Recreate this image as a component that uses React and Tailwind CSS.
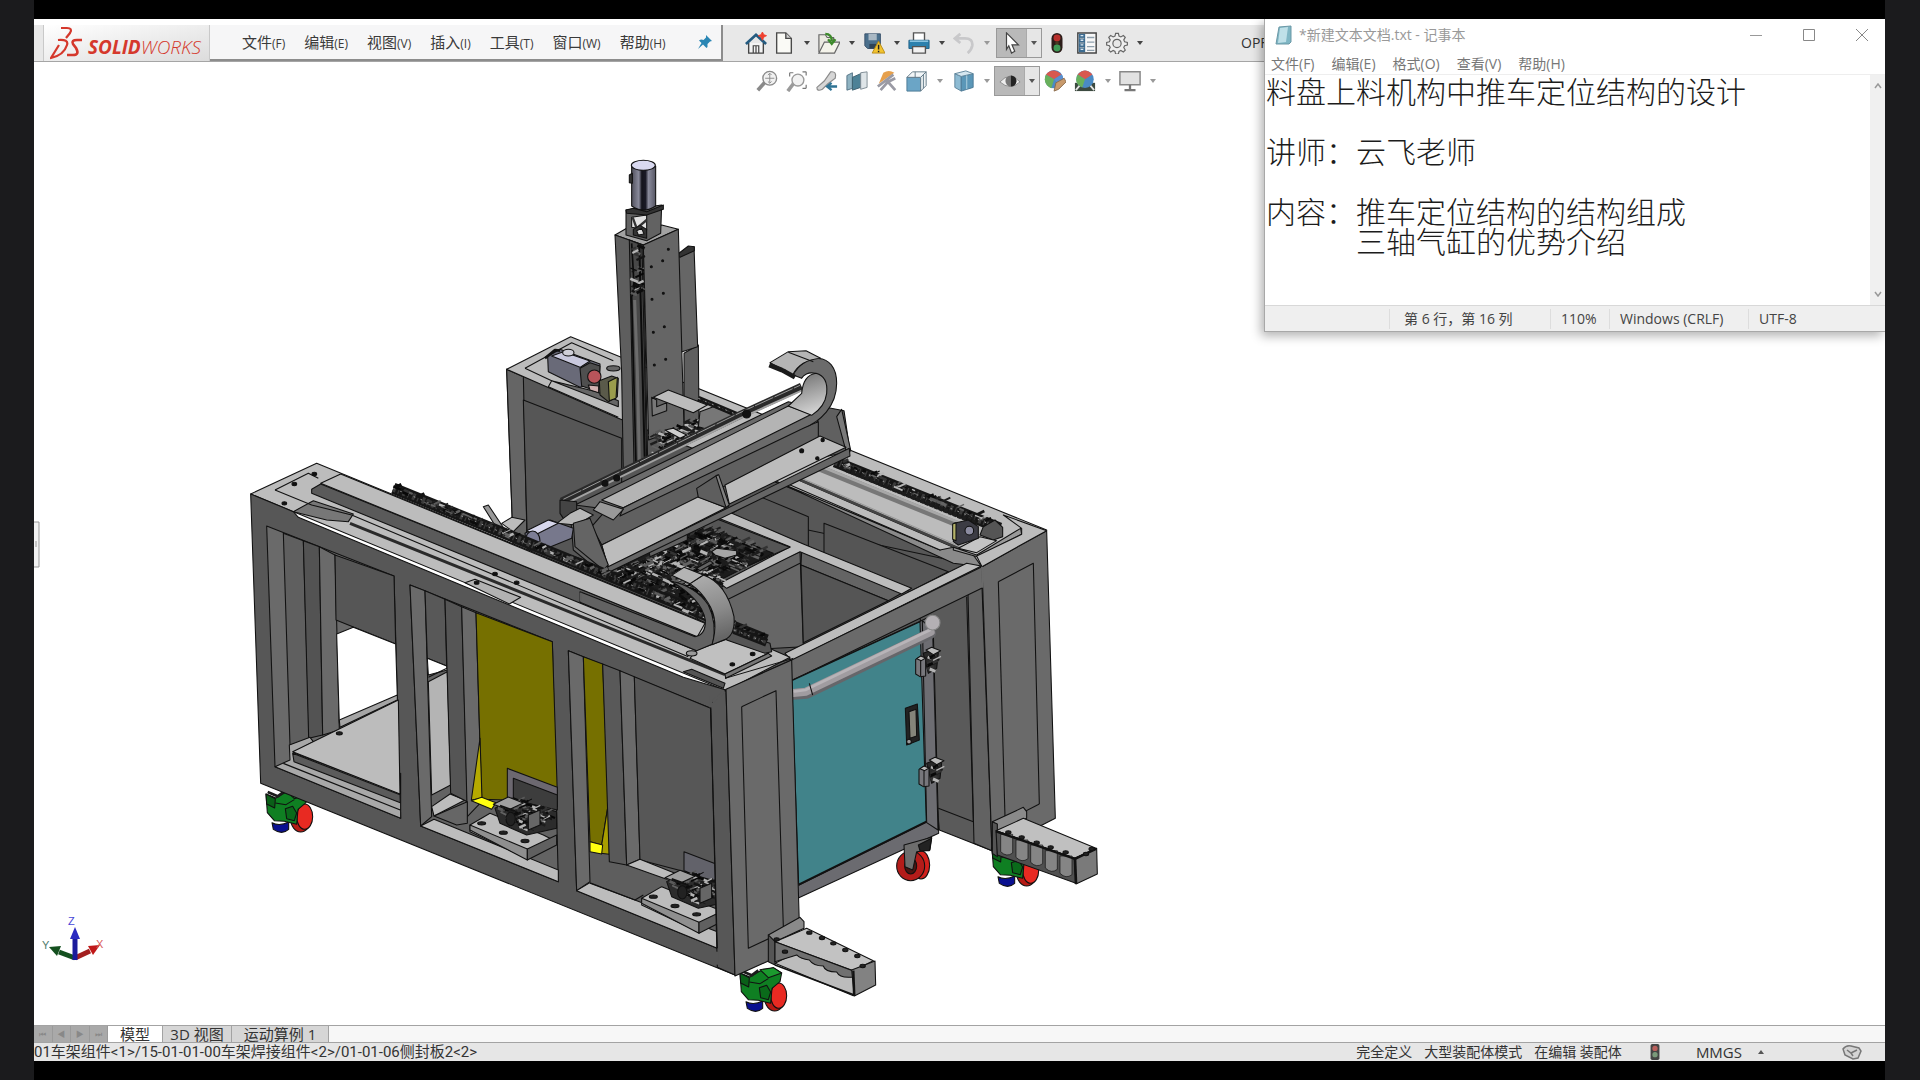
import { useState } from "react";

const DARK = "#575757";
const MID = "#6a6a6a";
const LIGHT = "#bcbcbc";

const MENUS = [
  ["文件", "(F)"],
  ["编辑", "(E)"],
  ["视图", "(V)"],
  ["插入", "(I)"],
  ["工具", "(T)"],
  ["窗口", "(W)"],
  ["帮助", "(H)"],
];

const NOTEPAD_MENUS = ["文件(F)", "编辑(E)", "格式(O)", "查看(V)", "帮助(H)"];

const NOTE_TEXT = `料盘上料机构中推车定位结构的设计

讲师：云飞老师

内容：推车定位结构的结构组成
　　　三轴气缸的优势介绍`;

/* ---------- small building blocks ---------- */

function Icon({ children }) {
  return (
    <svg viewBox="0 0 24 24" className="h-[22px] w-[22px] shrink-0" fill="none">
      {children}
    </svg>
  );
}

function Caret({ color = "#555" }) {
  return (
    <svg viewBox="0 0 6 4" className="h-1 w-1.5" fill={color}>
      <path d="M0 0h6L3 4z" />
    </svg>
  );
}

function Tool({ label, children }) {
  return (
    <button type="button" aria-label={label} className="flex shrink-0 items-center">
      <Icon>{children}</Icon>
    </button>
  );
}

function SplitTool({ label, children, muted }) {
  return (
    <div className="flex w-[45px] shrink-0 items-center">
      <Tool label={label}>{children}</Tool>
      <button
        type="button"
        aria-label={`${label} 选项`}
        className="flex flex-1 items-center justify-center"
      >
        <Caret color={muted ? "#999" : "#444"} />
      </button>
    </div>
  );
}

function ActiveTool({ label, children }) {
  return (
    <div className="flex h-[30px] w-[46px] shrink-0 border border-[#999]">
      <button
        type="button"
        aria-label={label}
        className="flex w-[29px] items-center justify-center bg-[#b9b9b9]"
      >
        <Icon>{children}</Icon>
      </button>
      <button
        type="button"
        aria-label={`${label} 选项`}
        className="flex flex-1 items-center justify-center border-l border-[#aaa] bg-[#e6e6e6]"
      >
        <Caret />
      </button>
    </div>
  );
}

function TrafficLight() {
  return (
    <>
      <rect x="6" y="1" width="12" height="22" rx="6" fill="#2c1d1a" />
      <circle cx="12" cy="6.5" r="3.8" fill="#b9302c" />
      <circle cx="12" cy="12" r="2" fill="#4a3a20" />
      <circle cx="12" cy="17.5" r="3.8" fill="#3f9a55" />
    </>
  );
}

/* ---------- top bar ---------- */

function Logo() {
  return (
    <div className="flex w-[167px] shrink-0 items-center border-x border-[#c9c9c9] bg-linear-to-br from-white to-[#dcdcdc] pl-1.5">
      <svg viewBox="0 0 34 34" className="h-[34px] w-[34px] shrink-0" fill="none" stroke="#d5382c">
        <path d="M11 2h6q6 0 3 5l-4 5" strokeWidth="2.2" />
        <path d="M8 14q11-1 9 5-3 10-16 13l8-13" strokeWidth="2.2" />
        <path d="M32 14h-5q-6 0-4 4l3 4q4 7-3 7h-6" strokeWidth="2.6" />
      </svg>
      <span className="pl-1 pt-2 font-['Open_Sans',sans-serif] text-[19px] leading-none italic text-[#d5382c]">
        <b>SOLID</b>
        <span className="font-light">WORKS</span>
      </span>
    </div>
  );
}

function TopBar() {
  return (
    <header className="flex h-[37px] shrink-0 overflow-hidden border-b border-[#a5a5a5] bg-[#e8e8e8] pl-[9px]">
      <Logo />
      <nav className="flex w-[513px] shrink-0 items-center gap-[19px] border-r-2 border-b-2 border-[#8c8c8c] bg-[#f6f6f7] pl-8 text-[15px] text-[#3a3a3a]">
        {MENUS.map(([name, key]) => (
          <button key={name} type="button" className="flex shrink-0 items-baseline whitespace-nowrap">
            {name}
            <span className="text-[12px]">{key}</span>
          </button>
        ))}
        <button type="button" aria-label="固定菜单" className="ml-3 shrink-0">
          <svg viewBox="0 0 16 16" className="h-4 w-4">
            <path d="M9 1l6 6-2 .5-2.500 2.500q.5 3-1 4L6 10.500 1 15l3.500-6L2 6.500q2-1.500 4.500-.5L9 3.500z" fill="#2a86b4" />
          </svg>
        </button>
      </nav>
      <div className="flex shrink-0 items-center pl-[22px]">
        <div className="mr-1.5 flex">
          <Tool label="主页">
            <path d="M4 12v11h16V12" fill="#f4f4f4" stroke="#444" strokeWidth="1.500" />
            <path d="M1 13L12 3l11 10" stroke="#245b80" strokeWidth="3" />
            <path d="M9 23v-8h6v8M12 15v8" stroke="#444" strokeWidth="1.300" />
            <path d="M19 0l1.500 3 3 1-3 1.500L19 9l-1.500-3.500-3-1.500 3-1z" fill="#f0402e" stroke="#f0402e" />
          </Tool>
        </div>
        <SplitTool label="新建">
          <path d="M4 1h10l6 6v16H4z" fill="#fafaf6" stroke="#4a4a4a" strokeWidth="1.500" />
          <path d="M14 1v6h6" fill="#d0d0d0" stroke="#4a4a4a" strokeWidth="1.500" />
        </SplitTool>
        <SplitTool label="打开">
          <path d="M1 22V3h7l2 3h7v6" fill="#ecebe2" stroke="#666" strokeWidth="1.300" />
          <path d="M1 23L7 11h17l-6 12z" fill="#f4f3ea" stroke="#666" strokeWidth="1.300" />
          <path d="M8 2q7 0 7 8M11 8l4 5 4-5" stroke="#3d8a2a" strokeWidth="2.600" />
        </SplitTool>
        <SplitTool label="保存">
          <path d="M2 2h17v16H5l-3-3z" fill="#4a6f8c" stroke="#39516a" />
          <path d="M6 2h9v7H6z" fill="#a9b8c4" />
          <path d="M7 13h8v5H7z" fill="#2e4356" />
          <path d="M17 10l7 13H10z" fill="#f2c32e" stroke="#b98b15" />
          <path d="M17 14v5M17 20.500v1.500" stroke="#222" strokeWidth="1.600" />
        </SplitTool>
        <SplitTool label="打印">
          <path d="M6 10V1h12v9" fill="#fff" stroke="#555" strokeWidth="1.500" />
          <path d="M1 9h22v9H1z" fill="#2c81ae" stroke="#1f5f86" />
          <path d="M2 10h20" stroke="#9ad0ea" strokeWidth="1.500" />
          <path d="M5 16h14v7H5z" fill="#f2f2f2" stroke="#555" strokeWidth="1.500" />
        </SplitTool>
        <SplitTool label="撤消" muted>
          <path d="M8 2L2 7l6 5M3 7h10q9 0 8 8-1 5-5 8" stroke="#c8c8ca" strokeWidth="3" />
        </SplitTool>
        <div className="-ml-0.5 mr-1 flex">
          <ActiveTool label="选择">
            <path d="M6 1l13 13h-7l3 7-3.500 2-3-8L6 19z" fill="#fff" stroke="#444" strokeWidth="1.300" />
          </ActiveTool>
        </div>
        <div className="flex items-center gap-2">
          <Tool label="重建模型">
            <TrafficLight />
          </Tool>
          <Tool label="文件属性">
            <path d="M2 1h20v22H2z" fill="#f8f8f8" stroke="#454545" strokeWidth="1.600" />
            <path d="M3 2h7v20H3z" fill="#3d6c91" />
            <path d="M4 7h5M4 12h5M4 17h5M12 6h8M12 11h8M12 16h8M12 20h8" stroke="#8fa0ad" strokeWidth="1.500" />
            <path d="M5 4h3M5 9h3M5 14h3M5 19h3" stroke="#dbe8f2" strokeWidth="1.500" />
          </Tool>
          <SplitTool label="选项">
            <path
              d="M10.500 1.500h3l.7 3 2 .9 2.700-1.600 2.100 2.100-1.600 2.700.9 2 3 .7v3l-3 .7-.9 2 1.600 2.700-2.100 2.100-2.700-1.600-2 .9-.7 3h-3l-.7-3-2-.9-2.700 1.600L3 19.700 4.600 17l-.9-2-3-.7v-3l3-.7.9-2L3 5.900l2.100-2.100 2.700 1.600 2-.9z"
              fill="#efefef"
              stroke="#666"
              strokeWidth="1.300"
            />
            <circle cx="12" cy="12.500" r="4.500" fill="#e8e8e8" stroke="#666" strokeWidth="1.300" />
          </SplitTool>
        </div>
      </div>
      <span className="ml-[90px] self-center font-['Open_Sans',sans-serif] text-sm text-[#333]">OPF</span>
    </header>
  );
}

function ViewBar() {
  return (
    <div className="flex h-[35px] shrink-0 items-center gap-2 overflow-hidden bg-white pt-0.5 pl-[722px]">
      <Tool label="整屏显示全图">
        <path d="M2 22l8-9" stroke="#8a8a8a" strokeWidth="4" />
        <circle cx="15" cy="9" r="7.500" fill="#f2f2f2" stroke="#8a8a8a" strokeWidth="1.500" />
        <path d="M15 4v10M10 9h10M13 5.500l2-2 2 2M13 12.500l2 2 2-2" stroke="#8a8a8a" />
      </Tool>
      <Tool label="局部放大">
        <path d="M2 23l6-8" stroke="#9a9a9a" strokeWidth="4" />
        <circle cx="13" cy="11" r="6.500" fill="#f2f2f2" stroke="#9a9a9a" strokeWidth="1.500" />
        <path d="M4 3h4M4 3v4M22 2h-4M22 2v4M22 20h-4M22 20v-4" stroke="#777" strokeWidth="1.300" />
      </Tool>
      <Tool label="上一视图">
        <path d="M16 2q7-1 5 7l-8 6-6 6q-6 3-6-2l8-7z" fill="#d6d6d6" stroke="#8b8b8b" strokeWidth="1.300" />
        <path d="M23 18h-9M17 14l-5 4 5 4" stroke="#2f7394" strokeWidth="2.500" />
      </Tool>
      <Tool label="剖面视图">
        <path d="M1 6l6-3v17l-6 2z" fill="#8fb3c2" stroke="#517082" />
        <path d="M7 8l9-4v15l-9 3z" fill="#4d8297" stroke="#3d5f6f" />
        <path d="M16 3l7-1v17l-7 2z" fill="#dfe5e8" stroke="#7b8890" />
      </Tool>
      <Tool label="动态注解视图">
        <path d="M8 3q6-4 12 0L3 15z" fill="#e6a04c" />
        <path d="M2 18L19 5M5 22l8-9 8 9M13 13l8-4" stroke="#9a9aa4" strokeWidth="3" />
      </Tool>
      <div className="flex items-center">
        <SplitTool label="视图定向" muted>
          <path d="M1 8h15v15H1z" fill="#6ba5c6" stroke="#4b7894" />
          <path d="M1 8l6-6h15l-6 6z" fill="#f2f6f8" stroke="#5f7785" />
          <path d="M16 8l6-6v15l-6 6z" fill="#eef2f4" stroke="#5f7785" />
          <path d="M10 2v6M19 5v15" stroke="#5f7785" />
        </SplitTool>
        <span className="w-0.5" />
        <SplitTool label="显示样式" muted>
          <path d="M2 4l7 3v16l-7-4z" fill="#8dbbd3" stroke="#5b8299" />
          <path d="M9 7l13-3v15L9 23z" fill="#5b97b8" stroke="#4b7894" />
          <path d="M2 4l12-3 8 3-13 3z" fill="#d5e6ef" stroke="#5b8299" />
          <path d="M15 6v15" stroke="#b7d5e4" />
        </SplitTool>
        <div className="-ml-1 mr-1 flex">
          <ActiveTool label="隐藏/显示项目">
            <path d="M1 13Q12 1 23 13 12 23 1 13z" fill="#eee" stroke="#888" />
            <circle cx="13" cy="12" r="6" fill="#777" />
            <path d="M13 6a6 6 0 010 12z" fill="#222" />
          </ActiveTool>
        </div>
        <div className="flex items-center gap-2">
          <Tool label="编辑外观">
            <circle cx="11" cy="10" r="10" fill="#4a8ac4" />
            <path d="M11 10L2 5q8-9 17 0z" fill="#d8584f" />
            <path d="M11 10L19 5q5 7-2 12z" fill="#5b8fd0" />
            <path d="M11 10L2 5q-4 10 6 15z" fill="#69b05c" />
            <path d="M11 23l2-9 9-5 2 4-8 8z" fill="#c89a6c" stroke="#8a6a4a" />
          </Tool>
          <SplitTool label="应用布景" muted>
            <path d="M1 14h22v9H1z" fill="#3c4a40" />
            <path d="M2 22l5-6M17 16l5 6" stroke="#e4e4e4" strokeWidth="2" />
            <circle cx="12" cy="10" r="9.500" fill="#4a8ac4" />
            <path d="M12 10L4 5q8-9 16 0z" fill="#d8584f" />
            <path d="M12 10L4 5q-5 10 5 14z" fill="#69b05c" />
          </SplitTool>
        </div>
        <SplitTool label="视图设定" muted>
          <path d="M1 2h22v14H1z" fill="#e2e2e2" stroke="#888" strokeWidth="1.600" />
          <path d="M12 16v5M6 22h12" stroke="#777" strokeWidth="2.500" />
        </SplitTool>
      </div>
    </div>
  );
}

/* ---------- model drawing ---------- */

function P({ p, f = "none" }) {
  return <polygon points={p} fill={f} />;
}

function L({ p, w, c, d }) {
  return <polyline points={p} fill="none" stroke={c} strokeWidth={w} strokeDasharray={d} />;
}

// Every part group is drafted at three times the sheet scale.
function Part({ x, y, children }) {
  return (
    <g
      transform={`translate(${x} ${y}) scale(0.33333)`}
      stroke="#111"
      strokeWidth="3.2"
      strokeLinejoin="round"
    >
      {children}
    </g>
  );
}

// Fills the quad a-b-c-d with small machine parts.
function Clutter({ a, b, c, d, n, seed = 7 }) {
  const shades = ["#080808", "#0c0c0c", "#141414", "#1d1d1d", "#333", "#5a5a5a", "#636363", "#b4b4b4"];
  let s = seed;
  const rnd = () => {
    s = (s * 16807) % 2147483647;
    return s / 2147483647;
  };
  const items = [];
  for (let i = 0; i < n; i++) {
    const u = rnd();
    const v = rnd();
    const x = (1 - v) * ((1 - u) * a[0] + u * b[0]) + v * ((1 - u) * d[0] + u * c[0]);
    const y = (1 - v) * ((1 - u) * a[1] + u * b[1]) + v * ((1 - u) * d[1] + u * c[1]);
    const len = 8 + rnd() * 18;
    const dir = rnd() > 0.5 ? 0.42 : -0.48;
    items.push(
      <path
        key={i}
        d={`M${x.toFixed(0)} ${y.toFixed(0)}l${len.toFixed(0)} ${(len * dir).toFixed(0)}`}
        stroke={shades[Math.floor(rnd() * shades.length)]}
        strokeWidth={(3 + rnd() * 6).toFixed(0)}
      />
    );
  }
  return <g fill="none">{items}</g>;
}

function Rail({ p, w = 22 }) {
  return (
    <>
      <L p={p} w={w} c="#161616" />
      <L p={p} w={Math.max(w - 14, 3)} c="#3a3a3a" d="9 7 4 11" />
      <L p={p} w={3} c="#999" d="5 17" />
    </>
  );
}

function BackCabinet() {
  return (
    <Part x={480} y={140}>
      <P p="80,688 1500,1275 1500,1600 800,1600 100,1230" f={DARK} />
      <P p="80,688 130,710 142,1240 100,1225" f="#656565" />
      <P p="130,780 425,895 425,1300 142,1200" f="#565656" />
      <P p="80,688 272,590 1700,1170 1500,1275 415,835" f={LIGHT} />
      <L p="135,685 275,608 400,662" />
      <L p="135,685 215,722 205,740 415,832" />
      <P p="215,722 415,800 415,782 350,755" f="#666" />
      <P p="203,650 240,628 360,672 358,725 300,742 205,695" f="#696a78" />
      <P p="215,648 250,635 330,663 300,682" f="#c9c9de" />
      <L p="195,655 225,630 240,632" w="8" />
      <ellipse cx="265" cy="638" rx="17" ry="10" fill="#cfcfd8" />
      <P p="300,685 330,668 360,678 356,755 305,738" f="#4f4f4f" />
      <ellipse cx="343" cy="710" rx="20" ry="20" fill="#b9545a" />
      <P p="325,735 356,738 356,758 330,750" f="#d0b0b0" />
      <P p="358,722 395,708 415,715 412,770 385,785 360,765" f="#5a5a4a" />
      <P p="385,725 412,712 408,775 388,782" f="#9a9c4c" />
      <ellipse cx="400" cy="685" rx="20" ry="8" fill="#666" />
    </Part>
  );
}

function Tower() {
  return (
    <Part x={480} y={140}>
      <P p="612,640 655,615 657,850 612,850" f="#5f5f5f" />
      <P p="590,345 642,320 653,620 602,637" f="#666" />
      <P p="590,345 625,318 643,320 643,332 600,352" f="#333" />
      <P p="405,285 440,265 545,255 595,268 490,315" f="#a2a2a2" />
      <P p="405,285 490,315 503,965 430,1000 425,700" f="#5e5e5e" />
      <P p="490,315 595,268 612,860 506,900" f="#656565" />
      <P p="448,300 486,315 500,960 462,975" f="#484848" />
      <L p="455,310 463,450 455,470 468,970" w="5" c="#0c0c0c" />
      <L p="478,315 482,480 494,950" w="6" c="#0c0c0c" />
      <L p="464,480 472,690 478,960" w="9" c="#6c6c6c" />
      <Clutter a={[448, 310]} b={[475, 315]} c={[480, 460]} d={[452, 460]} n={26} seed={13} />
      {[[565, 328], [548, 362], [514, 380], [550, 460], [516, 478], [553, 560], [520, 577], [557, 658], [523, 675]].map(
        ([cx, cy]) => (
          <circle key={cx} cx={cx} cy={cy} r="3" fill="#111" />
        )
      )}
      <P p="438,210 545,195 542,280 500,302 438,285" f="#626262" />
      <P p="455,232 500,225 500,270 455,262" f="#e2e2e2" />
      <L p="458,232 470,265 500,240" w="7" c="#333" />
      <P p="460,268 480,256 500,268 500,295 460,285" f="#333" />
      <P p="470,272 485,265 492,282 475,285" f="#ddd" />
      <path d="M455 78v120q35 25 72 0V78z" fill="url(#steel)" />
      <ellipse cx="490" cy="76" rx="36" ry="15" fill="#d9d9f0" />
      <P p="448,105 457,100 457,130 448,128" f="#333" />
      <P p="438,210 460,205 500,215 550,195 550,208 500,225 440,220" f="#333" />
      {/* cable bracket at the foot of the tower */}
      <P p="515,772 530,780 530,800 560,788 560,812 517,828" f="#777" />
      <P p="520,772 565,750 682,795 640,818" f={LIGHT} />
      <Clutter a={[505, 880]} b={[650, 835]} c={[660, 880]} d={[515, 945]} n={90} seed={5} />
      <P p="660,815 700,800 780,830 690,870 655,860" f="#777" />
      <Rail p="655,775 780,828" w={16} />
      <P p="555,870 580,865 620,885 600,895" f="#d0d0d0" />
    </Part>
  );
}

function RightBeam() {
  return (
    <Part x={600} y={420}>
      <P p="365,275 1145,440 1100,520 605,680 400,680 120,460" f={DARK} />
      <P p="480,230 625,290 625,400 380,290" f="#565656" />
      <P p="672,310 1045,455 930,515 672,400" f="#555" />
      <P p="520,180 1020,390 1040,375 1120,405 1145,440 1060,430" f="#8a8a8a" />
      <P p="555,188 590,178 1060,382 1020,390" f={LIGHT} />
      <L p="590,175 1100,395" w="8" c="#444" />
      <L p="590,168 1105,390" w="3" c="#999" />
      <L p="660,145 1070,312" w="20" c="#777" />
      <L p="665,140 1075,307" w="8" c="#a8a8a8" />
      <Rail p="705,125 1200,325" w={34} />
      <L p="740,150 1130,310" w={14} c="#1c1c1c" d="12 3" />
      <Clutter a={[730, 125]} b={[1180, 305]} c={[1180, 320]} d={[710, 132]} n={60} seed={31} />
      <P p="1150,320 1185,300 1208,322 1208,350 1180,360 1140,345" f="#555" />
      <P p="1060,382 1130,405 1262,325 1265,343 1132,410 1060,390" f="#999" />
      <P p="1075,385 1140,350 1190,362 1130,398" f="#c4c4c4" />
      <P p="1062,310 1105,300 1135,320 1135,355 1075,375 1060,365" f="#3c3c44" />
      <P p="1058,312 1068,308 1068,362 1058,358" f="#b5b36a" />
      <circle cx="1108" cy="332" r="13" fill="#8b8ba0" />
      {/* interior walls */}
      <P p="365,500 600,395 610,680 430,690" f="#666" />
      <P p="605,395 905,520 865,542 603,435" f="#646464" />
      <P p="603,435 865,542 610,668" f="#555" />
      <L p="380,540 600,430" />
      <P p="345,290 385,275 610,372 935,505 905,522 600,395 380,505 360,490 570,380" f={LIGHT} />
      <P p="345,295 570,382 450,435 250,340" f="#555" />
      <P p="140,400 320,320 520,400 360,480 370,600 320,600 20,460" f="#1c1c1c" />
      <Clutter a={[140, 400]} b={[320, 320]} c={[500, 395]} d={[330, 475]} n={420} seed={77} />
      <Clutter a={[20, 460]} b={[160, 400]} c={[360, 470]} d={[320, 600]} n={420} seed={91} />
      <P p="335,395 350,385 410,392 410,405 375,415 345,405" f="#a6a6a6" />
      <P p="145,385 262,335 262,360 150,410" f="#626262" />
      <P p="290,445 330,422 340,430 300,452" f="#626262" />
    </Part>
  );
}

function RightCabinet() {
  return (
    <Part x={600} y={420}>
      <P p="960,590 1146,500 1176,1292 1018,1230" f="#5a5a5a" />
      <P p="1104,522 1146,500 1176,1292 1122,1270" f="#626262" />
      <L p="1100,530 1120,1205 1015,1165" />
      <P p="1146,440 1340,332 1366,1195 1176,1292" f={MID} />
      <L p="1195,485 1300,430 1318,1152" />
      <L p="1195,485 1215,1190" />
      <L p="1318,1152 1215,1205" />
      <P p="1130,408 1265,343 1265,325 1210,285 1340,332 1146,440" f={LIGHT} />
      <P p="555,700 1100,430 1144,438 575,722" f={LIGHT} />
      <P p="380,806 575,720 1146,440 1148,503 575,782 380,870" f={MID} />
      <L p="1146,440 1148,503" c={MID} w="6" />
    </Part>
  );
}

function Gantry() {
  return (
    <>
      <Part x={480} y={140}>
        <P p="1010,850 1030,800 1092,812 1110,935 1010,955" f="#606060" />
        <P p="1085,808 1112,930 1100,940 1070,830" f="#7a7a7a" />
        <P p="335,1160 400,1085 1015,845 1015,895 730,1040 365,1215" f="#606060" />
        <P p="735,1035 1020,888 1098,922 748,1092" f={LIGHT} />
        <P p="365,1215 655,1070 738,1103 385,1282" f={LIGHT} />
        <P p="650,1045 712,1005 745,1100 735,1102 655,1072" f="#5e5e5e" />
        <P p="708,1008 716,1004 748,1095 738,1102" f="#808080" />
        <P p="375,1285 1108,925 1110,948 380,1300" f="#666" />
        <P p="335,1160 365,1215 385,1290 365,1300 280,1230 270,1110" f="#646464" />
        <P p="320,1140 335,1150 382,1290 370,1300" f="#7c7c7c" />
        <L p="245,1085 780,825 965,740" w="24" c="#2a2a2a" />
        <L p="270,1085 780,835 965,752" w="6" c="#a2a2a2" />
        <L p="250,1078 780,818 960,736" w="3" c="#999" d="60 4" />
        <P p="285,1095 925,785 990,800 400,1110" f="#6c6c6c" />
        <P p="365,1080 925,798 1000,825 430,1103" f="#b4b4b4" />
        <path
          d="M940 705C970 640 1070 630 1070 730 1070 800 1020 845 970 865L420 1128 430 1103 990 825C1040 790 1045 710 1005 700 985 695 970 705 965 715Z"
          fill="#6b6b6b"
        />
        <path d="M925 798L965 760Q970 705 1008 700 1045 710 1040 760 1035 800 995 826Z" fill="url(#loop)" />
        <path d="M870 668L925 635 978 632 1022 655Q960 660 938 705Z" fill="#b5b5b5" />
        <L p="868,675 905,690 915,695 945,712" w="14" c="#1a1a1a" />
        <L p="925,637 1000,665" />
        <P p="240,1080 290,1085 290,1110 260,1150 240,1120" f="#444" />
        <P p="360,1085 430,1108 400,1140 340,1110" f="#999" />
        <P p="270,1120 300,1105 340,1125 290,1155 230,1150" f="#b8b8b8" />
        <circle cx="965" cy="932" r="6" fill="#111" />
        <circle cx="1028" cy="900" r="5" fill="#111" />
        <circle cx="1012" cy="955" r="5" fill="#111" />
        <circle cx="375" cy="1030" r="9" fill="#111" />
        <circle cx="410" cy="1014" r="9" fill="#111" />
        <circle cx="800" cy="822" r="12" fill="#111" />
      </Part>
      <Part x={230} y={440}>
        <P p="760,200 775,195 825,270 810,280" f="#999" />
        <P p="815,250 845,232 885,240 850,275" f={LIGHT} />
        <P p="1030,250 1080,235 1135,375 1120,390 1035,320" f="#646464" />
        <P p="885,280 960,240 1030,265 1025,295 925,335 890,318" f="#77788c" />
        <P p="890,272 955,240 985,250 915,285" f="#d7d7ec" />
        <ellipse cx="908" cy="303" rx="22" ry="30" fill="#7c7d95" />
      </Part>
    </>
  );
}

function Fixture() {
  return (
    <>
      <P p="90,90 150,55 310,120 350,140 260,190 90,110" f={LIGHT} />
      <P p="90,90 262,162 262,195 90,105" f="#8f8f8f" />
      <P p="262,162 350,120 350,150 262,195" f="#606060" />
      <P p="165,40 215,10 350,50 350,100 260,120 180,85" f="#2c2c2c" />
      <Clutter a={[165, 40]} b={[220, 5]} c={[340, 60]} d={[250, 110]} n={130} seed={41} />
      <P p="160,28 205,6 250,24 205,45" f="#a0a0a0" />
      <L p="180,32 230,50" w="6" />
      <P p="265,60 300,45 300,90 265,105" f="#666" />
      <ellipse cx="212" cy="72" rx="14" ry="20" fill="#222" />
      <ellipse cx="125" cy="85" rx="12" ry="5" fill="#222" />
      <ellipse cx="190" cy="113" rx="12" ry="5" fill="#222" />
      <ellipse cx="255" cy="138" rx="12" ry="5" fill="#222" />
    </>
  );
}

function LeftFrame() {
  return (
    <Part x={230} y={440}>
      <Rail p="490,145 1610,600" w={34} />
      <Clutter a={[490, 135]} b={[1600, 590]} c={[1600, 610]} d={[490, 150]} n={160} seed={17} />
      <P p="62,162 260,70 1430,550 1560,600 1680,652 1488,752" f={LIGHT} />
      {/* raised cover with its shaded side */}
      <P p="245,148 272,132 1405,590 1400,632 245,160" f="#5a5a5a" />
      <P p="272,130 332,102 1425,550 1402,590" f={LIGHT} />
      <P p="190,215 250,182 370,222 355,245 290,240" f="#777" />
      <L p="135,150 245,195 365,225 1375,650" />
      <L p="135,150 235,100 265,115" />
      <L p="360,250 1485,704" w="9" c="#2a2a2a" />
      <P p="705,428 735,418 872,472 838,492" f="#b2b2b2" />
      {/* end plate and cable chain loop */}
      <g transform="translate(1050 240)">
        <P p="350,390 440,358 565,400 435,462 330,415" f="#c0c0c0" />
        <P p="435,462 565,400 575,408 437,475" f="#777" />
        <P p="440,345 460,335 570,370 575,395 555,400 440,360" f="#555" />
        <Rail p="462,330 560,368" w={24} />
        <L p="435,475 640,415" w="3" />
        <P p="310,455 335,448 435,490 430,505" f="#555" />
        <path
          d="M270 182Q350 200 385 255 412 310 398 372L350 392 0 247V215L345 350Q378 345 376 300 365 235 270 182Z"
          fill="#626262"
        />
        <path
          d="M330 191L370 165Q440 190 462 290 466 340 440 356L396 374Q418 300 385 250 365 215 330 191Z"
          fill="url(#band)"
        />
        <P p="275,166 312,142 370,165 330,191" f="#b4b4b4" />
        <ellipse cx="335" cy="400" rx="16" ry="8" fill="#999" />
        <L p="2,218 2,244" w="6" c="#5e5e5e" />
      </g>
      {[[253, 102], [193, 132], [163, 190], [795, 402], [860, 428], [740, 428], [1507, 673], [1568, 642]].map(([cx, cy]) => (
        <ellipse key={cx} cx={cx} cy={cy} rx="7" ry="5" fill="#111" />
      ))}

      <P p="62,162 190,215 205,232 700,438 838,495 1360,712 1488,750 1515,1605 92,1030" f={DARK} />

      {/* first bay */}
      <P p="110,258 492,408 512,1135 135,980" f={MID} />
      <P p="160,280 220,302 238,900 180,915" f="#5f5f5f" />
      <P p="220,302 268,320 278,885 236,895" f="#535353" />
      <P p="268,320 315,345 328,870 278,885" f={MID} />
      <P p="315,345 492,408 497,612 318,540" f="#565656" />
      <P p="320,582 370,562 497,612 502,770 328,850" f="#fff" />
      <P p="328,840 502,765 502,780 330,862" f="#a5a5a5" />
      <P p="178,915 240,892 250,905 190,938 510,1060 512,1000 512,1135 135,980 180,960" f="#a8a8a8" />
      <P p="188,935 505,780 510,1062" f={LIGHT} />
      <P p="188,940 510,1064 511,1088 192,965" f="#5b5b5b" />
      <L p="160,970 511,1110" w="4" />
      <ellipse cx="328" cy="880" rx="9" ry="5" fill="#222" />

      {/* second bay */}
      <P p="540,435 967,605 985,1325 572,1158" f="#636363" />
      <P p="540,435 585,452 605,1130 572,1158" f={MID} />
      <P p="585,452 645,478 650,678 592,655" f="#585858" />
      <P p="592,655 650,678 652,690 595,705" f="#fff" />
      <P p="595,725 652,695 662,1035 605,1065" f="#b4b4b4" />
      <L p="595,712 652,684" />
      <P p="605,1100 660,1062 705,1080 612,1128" f={LIGHT} />
      <P p="645,478 695,500 712,1085 662,1060" f="#555" />
      <P p="695,500 738,518 755,1085 712,1130" f={MID} />
      <P p="612,1128 712,1085 712,1150 680,1155" f="#666" />
      <P p="738,518 967,605 982,1060 830,1080 755,1078" f="#767000" />
      <P p="750,895 756,1075 724,1080" f="#b5aa00" />
      <P p="724,1082 755,1072 798,1088 785,1108" f="#ffff10" />
      <P p="832,985 982,1042 982,1100 832,1080" f="#6c6870" />
      <P p="850,1015 982,1065 982,1110 850,1080" f="#3d3d3d" />
      <P p="572,1158 612,1138 985,1290 985,1325" f={LIGHT} />
      <g transform="translate(630 1065)">
        <Fixture />
      </g>

      {/* third bay */}
      <P p="1015,632 1442,805 1462,1525 1040,1352" f="#5e5e5e" />
      <P p="1015,632 1060,650 1080,1325 1040,1352" f={MID} />
      <P p="1060,650 1118,672 1136,1085 1115,1215 1080,1205" f="#767000" />
      <P p="1136,1085 1138,1243 1112,1240 1115,1215" f="#a89e00" />
      <P p="1080,1205 1118,1215 1115,1242 1080,1235" f="#ffff10" />
      <P p="1118,672 1170,692 1190,1275 1138,1265" f="#595959" />
      <P p="1170,692 1213,710 1230,1258 1190,1275" f={MID} />
      <P p="1213,710 1442,805 1460,1320 1230,1260" f="#575757" />
      <P p="1190,1275 1230,1258 1335,1300 1310,1318" f={LIGHT} />
      <P p="1040,1352 1080,1328 1462,1475 1462,1525" f={LIGHT} />
      <L p="1080,1330 1215,1380 1240,1365" />
      <P p="1362,1235 1458,1272 1458,1340 1362,1300" f="#62626a" />
      <g transform="translate(1145 1285)">
        <Fixture />
      </g>
      <P p="1442,790 1488,750 1515,1605 1462,1582" f={DARK} />
      <L p="1447,786 1484,754" w="8" c={DARK} />
      <L p="1442,770 1442,802" w="8" c={DARK} />
      <L p="1442,805 1462,1525" />
      <L p="1462,1535 1462,1574" w="8" c={DARK} />
    </Part>
  );
}

function Cart() {
  return (
    <Part x={760} y={600}>
      <P p="92,242 500,55 520,100 536,700 110,896" f="#6b6b70" />
      <P p="95,242 480,65 499,667 116,856" f="#41838a" />
      <L p="116,854 499,665" w="6" />
      <P p="487,62 518,90 534,690 500,668" f="#6d6d72" />
      <g fill="none" strokeLinecap="round">
        <path d="M100 283L140 280 512 100" stroke="#66666a" strokeWidth="32" />
        <path d="M100 279L138 275 512 96" stroke="#a09ca0" strokeWidth="24" />
        <path d="M104 274L136 270 510 90" stroke="#b8b4b8" strokeWidth="8" />
      </g>
      <circle cx="518" cy="68" r="22" fill="#b4b0b4" stroke="#888" />
      <L p="148,250 158,285" />
      <P p="436,325 472,312 478,420 440,435" f="#222" />
      <P p="447,335 468,328 470,408 450,415" f="#85857a" />
      <circle cx="447" cy="425" r="7" fill="#999" />
      {[0, 330].map((dy) => (
        <g key={dy} transform={`translate(${dy / 33} ${dy})`}>
          <P p="490,160 515,150 535,158 530,205 505,220" f="#2a2a2a" />
          <Clutter a={[492, 170]} b={[520, 165]} c={[520, 205]} d={[500, 210]} n={16} seed={61} />
          <P p="498,150 515,142 542,152 520,164" f="#bbb" />
          <P p="467,178 480,170 497,176 497,228 480,230 467,222" f="#77777c" />
          <P p="470,176 482,168 497,174 484,182" f="#bbb" />
          <L p="482,182 482,228" />
        </g>
      ))}
      <ellipse cx="483" cy="795" rx="26" ry="42" fill="#d2201c" />
      <ellipse cx="452" cy="798" rx="42" ry="44" fill="#b41c1a" />
      <ellipse cx="452" cy="798" rx="18" ry="24" fill="#4a1512" />
      <P p="432,735 515,712 510,750 470,755 458,810 435,800" f="#6d6d6d" />
      <P p="475,735 515,715 508,752 480,752" f="#222" />
    </Part>
  );
}

function Caster({ x, y }) {
  return (
    <Part x={x} y={y}>
      <path d="M18 104q22 12 50-2v22q-20 18-46 0z" fill="#0a1090" />
      <ellipse cx="104" cy="92" rx="30" ry="40" fill="#b51a14" />
      <ellipse cx="116" cy="86" rx="24" ry="38" fill="#e82a22" />
      <P p="0,18 30,30 60,12 100,2 125,18 120,44 96,64 92,109 55,100 25,98 4,74" f="#0f7f22" />
      <P p="60,8 100,2 125,18 85,32" f="#1b9a2e" />
      <P p="0,18 28,32 26,60 2,48" f="#0a5f18" />
      <P p="58,62 80,55 92,75 85,98 62,92" f="#0a6a1a" />
      <L p="5,12 35,25 55,10" w="8" c="#1c1c1c" />
      <L p="28,45 60,50 85,35" />
    </Part>
  );
}

function FrontColumn() {
  return (
    <>
      <Caster x={740} y={967} />
      <Part x={440} y={680}>
        <P p="858,28 1055,-60 1080,800 885,888" f={MID} />
        <L p="905,80 1008,32 1030,740" />
        <L p="905,80 925,805 1030,755" />
        <path d="M1005 850l80-40 155 62v75z" fill={LIGHT} />
        <P p="985,765 1005,775 1005,855 985,845" f="#555" />
        <P p="985,765 1080,712 1092,725 1092,745 1005,785" f="#8a8a8a" />
        <P p="1005,785 1100,745 1300,842 1240,872" f="#c2c2c2" />
        <path d="M1005 785l235 88v18q-40 5-50-15-35 0-40-18-30 0-42-18-25-2-38-15l-65 20z" fill="#707070" />
        <P p="1235,870 1305,843 1307,915 1243,948" f="#828282" />
        <L p="1005,855 1243,945" w="5" />
        <L p="1240,872 1243,948" w="7" />
        {[[1108, 758], [1146, 774], [1180, 790], [1216, 810], [1252, 828], [1010, 778], [1268, 858], [1035, 815]].map(([cx, cy]) => (
          <ellipse key={cx} cx={cx} cy={cy} rx="8" ry="5" fill="#222" />
        ))}
      </Part>
    </>
  );
}

function RightFoot() {
  return (
    <>
      <Caster x={992} y={842} />
      <Part x={760} y={600}>
        <P p="697,665 790,622 800,635 800,655 710,700" f="#8a8a8a" />
        <P p="697,665 712,672 712,770 697,760" f="#555" />
        <P p="708,692 790,655 1008,745 945,775" f="#c0c0c0" />
        <P p="708,692 945,775 948,850 712,765" f="#505050" />
        {[[722, 703], [768, 720], [812, 735], [856, 752], [900, 768]].map(([x, y]) => (
          <path key={x} d={`M${x} ${y}h36v56q-18 14-36-4z`} fill="#858585" strokeWidth="2" />
        ))}
        <P p="943,775 1010,745 1012,822 948,852" f="#7a7a7a" />
        <L p="708,694 945,777 1008,747" w="7" />
        <L p="945,775 948,852" w="8" />
        {[[745, 697], [785, 712], [830, 728], [872, 742], [917, 757], [995, 747], [978, 762]].map(([cx, cy]) => (
          <ellipse key={cx} cx={cx} cy={cy} rx="8" ry="5" fill="#222" />
        ))}
      </Part>
    </>
  );
}

function Triad() {
  return (
    <g fontFamily="Liberation Sans, sans-serif" fontSize="11">
      <path d="M75 958l-16-6" stroke="#14501f" strokeWidth="5" />
      <path d="M49 947l12-1-4 10z" fill="#14501f" />
      <path d="M75 958l15-7" stroke="#a31f1f" strokeWidth="5" />
      <path d="M100 945l-12 1 5 9z" fill="#c01818" />
      <path d="M75 960v-24" stroke="#1b1b9c" strokeWidth="5" />
      <path d="M75 927l-5 12h10z" fill="#2a2ac0" />
      <text x="68" y="925" fill="#4747d8">Z</text>
      <text x="42" y="949" fill="#4f7a6c">Y</text>
      <text x="96" y="948" fill="#d85a5a">X</text>
    </g>
  );
}

function ModelView() {
  return (
    <main className="relative flex-1 bg-white">
      <svg
        viewBox="34 97 1851 928"
        preserveAspectRatio="xMinYMin meet"
        className="block w-full"
        role="img"
        aria-label="装配体模型"
      >
        <defs>
          <linearGradient id="steel">
            <stop offset="0" stopColor="#50505c" />
            <stop offset="0.3" stopColor="#8a8b9c" />
            <stop offset="0.42" stopColor="#14141c" />
            <stop offset="0.58" stopColor="#1a1a26" />
            <stop offset="0.7" stopColor="#8a8b9c" />
            <stop offset="1" stopColor="#565664" />
          </linearGradient>
          <linearGradient id="loop" x2="0.3" y2="1">
            <stop offset="0" stopColor="#6a6a6a" />
            <stop offset="1" stopColor="#cfcfcf" />
          </linearGradient>
          <linearGradient id="band" x2="0.2" y2="1">
            <stop offset="0" stopColor="#b0b0b0" />
            <stop offset="0.6" stopColor="#8a8a8a" />
            <stop offset="1" stopColor="#666" />
          </linearGradient>
        </defs>
        <path d="M34 522h5v45h-5M36 541v6" fill="#f2f2f2" stroke="#999" />
        <BackCabinet />
        <RightBeam />
        <Tower />
        <RightCabinet />
        <RightFoot />
        <Gantry />
        <Cart />
        <Caster x={266} y={788} />
        <LeftFrame />
        <FrontColumn />
        <Triad />
      </svg>
    </main>
  );
}

/* ---------- bottom bars ---------- */

function BottomBars() {
  const [tab, setTab] = useState("模型");
  const tabs = [
    ["模型", "w-[55px]"],
    ["3D 视图", "w-[69px]"],
    ["运动算例 1", "w-[97px]"],
  ];
  return (
    <footer className="shrink-0 text-[#333]">
      <div className="flex h-[18px] border-y border-[#a3a3a3] bg-[#f7f7f7] text-[15px] leading-4">
        <div className="flex w-[74px] shrink-0 items-center justify-around bg-[#a9a9a9] text-[8px] text-[#888]">
          {["⏮", "◀", "▶", "⏭"].map((g) => (
            <button key={g} type="button" className="flex-1 border-r border-[#9a9a9a]">
              {g}
            </button>
          ))}
        </div>
        {tabs.map(([name, width]) => (
          <button
            key={name}
            type="button"
            onClick={() => setTab(name)}
            className={`flex shrink-0 items-center justify-center whitespace-nowrap border-r border-[#a3a3a3] ${width} ${
              tab === name ? "bg-white" : "bg-[#d6d6d6]"
            }`}
          >
            {name}
          </button>
        ))}
      </div>
      <div className="flex h-[18px] items-center bg-[#e6e6e6] pr-[23px] text-sm leading-[18px] whitespace-nowrap">
        <span className="font-[Roboto,'Noto_Sans_CJK_SC',sans-serif] text-[15px]">
          01车架组件&lt;1&gt;/15-01-01-00车架焊接组件&lt;2&gt;/01-01-06侧封板2&lt;2&gt;
        </span>
        <div className="ml-auto flex gap-3">
          <span>完全定义</span>
          <span>大型装配体模式</span>
          <span>在编辑 装配体</span>
        </div>
        <svg viewBox="0 0 10 18" className="ml-7 h-4 w-2.5">
          <rect width="10" height="18" rx="2" fill="#444" />
          <circle cx="5" cy="5" r="3" fill="#b9605c" />
          <circle cx="5" cy="12" r="3" fill="#7a9a7a" />
        </svg>
        <span className="ml-9 text-[15px]">MMGS</span>
        <svg viewBox="0 0 6 4" className="ml-4 h-1 w-1.5" fill="#555">
          <path d="M0 4h6L3 0z" />
        </svg>
        <svg viewBox="0 0 20 15" className="ml-[78px] h-[15px] w-5" fill="none" stroke="#777" strokeWidth="1.500">
          <path d="M1 4q3-4 8-3l8 2 2 3-3 7-5 1-8-4z" fill="#d4d4d4" />
          <path d="M5 5l4 3 6-3M9 8l2 3" />
        </svg>
      </div>
    </footer>
  );
}

/* ---------- notepad window ---------- */

function Notepad() {
  const [text, setText] = useState(NOTE_TEXT);
  return (
    <section className="absolute top-0 right-0 flex w-[621px] flex-col border-b border-l border-[#a8a8a8] bg-white shadow-[-3px_4px_10px_rgba(0,0,0,0.3)]">
      <div className="flex h-8 items-center pl-2.5 text-[#999]">
        <svg viewBox="0 0 18 20" className="h-5 w-[18px]">
          <path d="M4 2l12-1v16l-2 2H1z" fill="#7fb6c4" stroke="#6a98a6" />
          <path d="M5 3l8-1-2 15-8 1z" fill="#bfe0e8" />
        </svg>
        <h1 className="pl-1.5 text-sm">*新建文本文档.txt - 记事本</h1>
        <div className="ml-auto flex gap-[39px] pr-4">
          <button type="button" aria-label="最小化">
            <svg viewBox="0 0 14 14" className="h-3.5 w-3.5" stroke="#999">
              <path d="M1 7.500h12" />
            </svg>
          </button>
          <button type="button" aria-label="最大化">
            <svg viewBox="0 0 14 14" className="h-3.5 w-3.5" stroke="#888" fill="none">
              <path d="M1.500 1.500h11v11h-11z" />
            </svg>
          </button>
          <button type="button" aria-label="关闭">
            <svg viewBox="0 0 14 14" className="h-3.5 w-3.5" stroke="#888">
              <path d="M1 1l12 12M13 1L1 13" />
            </svg>
          </button>
        </div>
      </div>
      <nav className="flex h-6 items-center gap-[17px] border-b border-[#eee] pt-0.5 pl-1.5 text-sm text-[#777]">
        {NOTEPAD_MENUS.map((m) => (
          <button key={m} type="button" className="whitespace-nowrap">
            {m}
          </button>
        ))}
      </nav>
      <div className="flex">
        <textarea
          aria-label="文本编辑器"
          rows={6}
          spellCheck={false}
          value={text}
          onChange={(e) => setText(e.target.value)}
          className="min-w-0 flex-1 resize-none overflow-hidden pt-0.5 pb-12 pl-px text-[30px] leading-[30px] font-light text-[#1c1c1c] outline-none"
        />
        <div className="flex w-[15px] flex-col items-center justify-between bg-[#f0f0f0] py-2">
          <button type="button" aria-label="向上滚动">
            <svg viewBox="0 0 8 6" className="h-1.5 w-2" fill="none" stroke="#999" strokeWidth="1.500">
              <path d="M1 5l3-4 3 4" />
            </svg>
          </button>
          <button type="button" aria-label="向下滚动">
            <svg viewBox="0 0 8 6" className="h-1.5 w-2" fill="none" stroke="#999" strokeWidth="1.500">
              <path d="M1 1l3 4 3-4" />
            </svg>
          </button>
        </div>
      </div>
      <div className="flex h-[26px] items-center border-t border-[#d8d8d8] bg-[#efefef] text-sm whitespace-nowrap text-[#444]">
        <span className="ml-[124px] w-[161px] border-l border-[#ddd] pl-3.5">第 6 行，第 16 列</span>
        <span className="w-[59px] border-l border-[#ddd] pl-2.5">110%</span>
        <span className="w-[139px] border-l border-[#ddd] pl-2.5">Windows (CRLF)</span>
        <span className="border-l border-[#ddd] pl-2.5">UTF-8</span>
      </div>
    </section>
  );
}

export default function App() {
  return (
    <div className="flex min-h-screen bg-[#1b1b1d] pr-[35px] pl-[34px] font-['Open_Sans','Noto_Sans_CJK_SC',sans-serif]">
      <div className="flex min-w-0 flex-1 flex-col bg-black py-[19px]">
        <div className="relative flex flex-1 flex-col overflow-hidden bg-white pt-1.5">
          <TopBar />
          <ViewBar />
          <ModelView />
          <BottomBars />
          <Notepad />
        </div>
      </div>
    </div>
  );
}
